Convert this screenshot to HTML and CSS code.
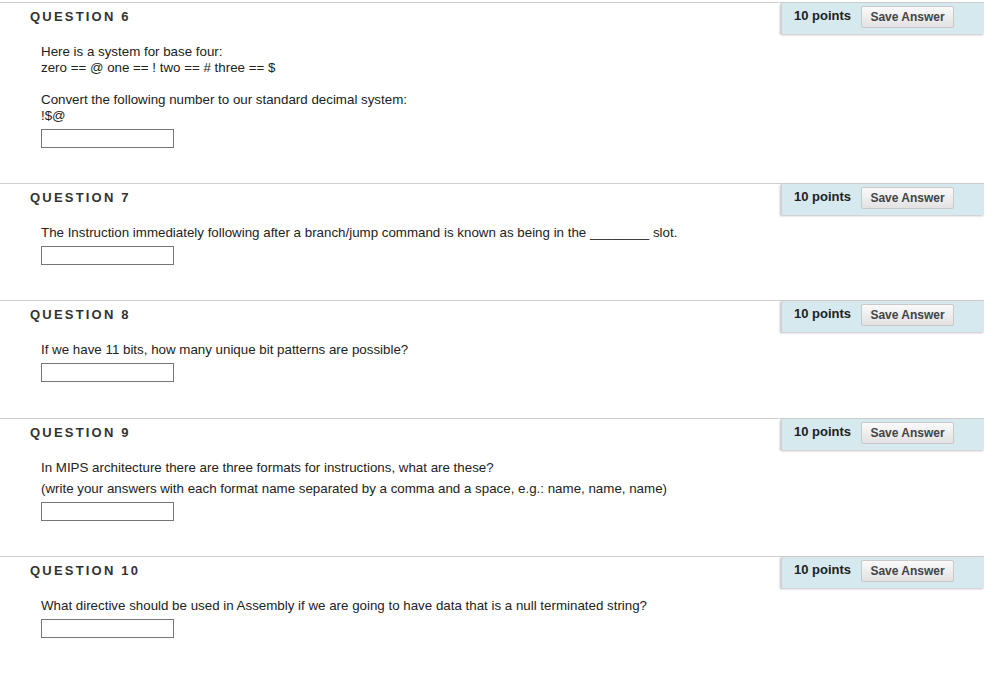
FILE: index.html
```html
<!DOCTYPE html>
<html>
<head>
<meta charset="utf-8">
<link rel="stylesheet" href="styles.css">
</head>
<body>
<div class="page">
  <section class="question">
    <div class="q-head">
      <h3 class="q-title">QUESTION 6</h3>
      <div class="q-points"><span class="pts">10 points</span><button class="save">Save Answer</button></div>
    </div>
    <div class="q-body">
      <div class="lines">Here is a system for base four:<br>zero == @ one == ! two == # three == $<br><br>Convert the following number to our standard decimal system:<br>!$@</div>
      <input class="answer" type="text">
    </div>
  </section>
  <section class="question">
    <div class="q-head">
      <h3 class="q-title">QUESTION 7</h3>
      <div class="q-points"><span class="pts">10 points</span><button class="save">Save Answer</button></div>
    </div>
    <div class="q-body">
      <div class="lines">The Instruction immediately following after a branch/jump command is known as being in the ________ slot.</div>
      <input class="answer" type="text">
    </div>
  </section>
  <section class="question q8">
    <div class="q-head">
      <h3 class="q-title">QUESTION 8</h3>
      <div class="q-points"><span class="pts">10 points</span><button class="save">Save Answer</button></div>
    </div>
    <div class="q-body">
      <div class="lines">If we have 11 bits, how many unique bit patterns are possible?</div>
      <input class="answer" type="text">
    </div>
  </section>
  <section class="question">
    <div class="q-head">
      <h3 class="q-title">QUESTION 9</h3>
      <div class="q-points"><span class="pts">10 points</span><button class="save">Save Answer</button></div>
    </div>
    <div class="q-body">
      <p class="para">In MIPS architecture there are three formats for instructions, what are these?</p>
      <p class="para">(write your answers with each format name separated by a comma and a space, e.g.: name, name, name)</p>
      <input class="answer" type="text">
    </div>
  </section>
  <section class="question">
    <div class="q-head">
      <h3 class="q-title">QUESTION 10</h3>
      <div class="q-points"><span class="pts">10 points</span><button class="save">Save Answer</button></div>
    </div>
    <div class="q-body">
      <div class="lines">What directive should be used in Assembly if we are going to have data that is a null terminated string?</div>
      <input class="answer" type="text">
    </div>
  </section>
</div>
</body>
</html>
```
FILE: styles.css
```css
html, body {
  margin: 0;
  padding: 0;
  background: #fff;
}
body {
  font-family: "Liberation Sans", Arial, sans-serif;
  font-size: 13.33px;
  color: #222;
}
.page {
  width: 984px;
  padding-top: 2px;
}
.question {
  border-top: 1px solid #cfcfcf;
  padding-bottom: 35px;
}
.question.q8 {
  padding-bottom: 36px;
}
.q-head {
  display: flex;
  justify-content: space-between;
  align-items: flex-start;
  height: 32px;
}
.q-title {
  margin: 0;
  padding: 6px 0 0 30px;
  font-size: 13px;
  line-height: 16px;
  font-weight: bold;
  letter-spacing: 2.2px;
  color: #333;
}
.q-points {
  width: 203px;
  height: 31px;
  box-sizing: border-box;
  background: #d5e9ef;
  border-left: 1px solid #c4d4d9;
  box-shadow: -1px 1px 2px rgba(0,0,0,0.25);
  display: flex;
  align-items: flex-start;
  padding: 3px 0 0 12px;
  gap: 10px;
}
.pts {
  font-weight: bold;
  font-size: 13px;
  line-height: 18px;
  color: #222;
  padding-top: 1px;
}
.save {
  font-family: "Liberation Sans", Arial, sans-serif;
  font-size: 12px;
  font-weight: bold;
  color: #444;
  height: 22px;
  width: 93px;
  padding: 0;
  border: 1px solid #c9c9c9;
  border-radius: 2px;
  background: linear-gradient(#fafafa, #e2e2e2);
}
.q-body {
  padding: 9px 0 0 41px;
}
.lines {
  line-height: 16px;
}
.para {
  margin: 0 0 5px 0;
  line-height: 16px;
}
.answer {
  display: block;
  margin-top: 5px;
  width: 133px;
  height: 19px;
  box-sizing: border-box;
  border: 1px solid #767676;
  border-radius: 0;
  padding: 0;
}
.para + .answer {
  margin-top: 0;
}
```
